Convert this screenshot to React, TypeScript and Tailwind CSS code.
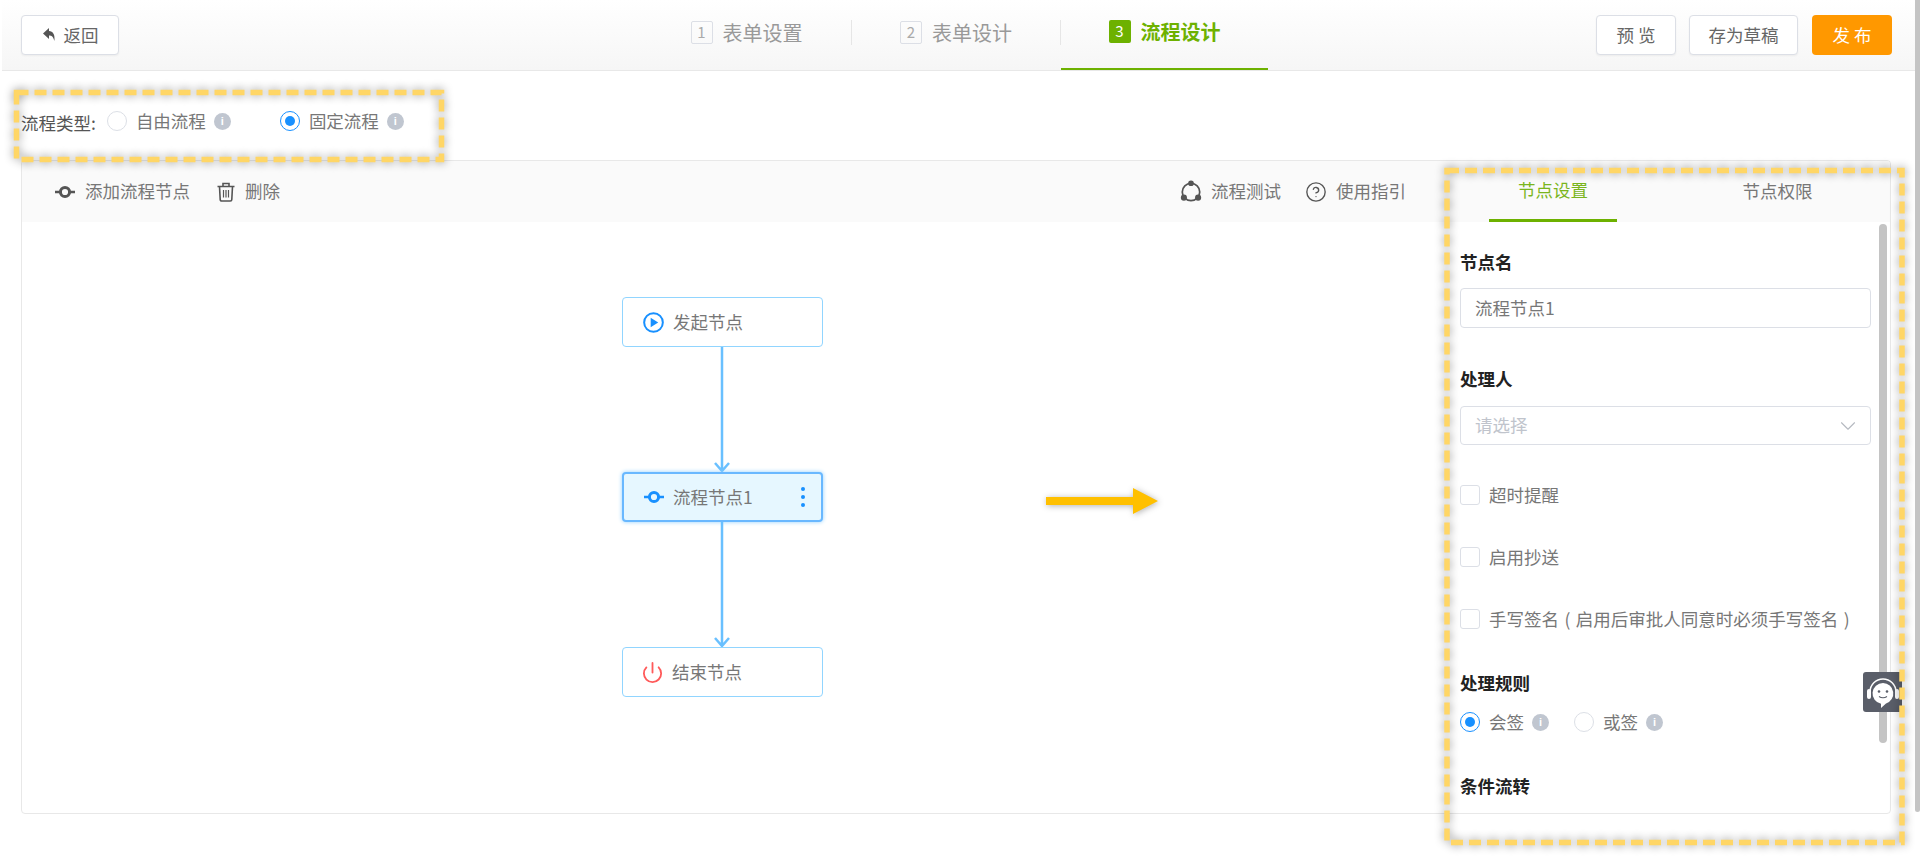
import { ChevronDown, CircleHelp, Power } from "lucide-react";

const FONT = "font-['Noto_Sans_CJK_SC','Liberation_Sans',sans-serif]";

function NodeIcon({ color, size = 20 }: { color: string; size?: number }) {
  return (
    <svg width={size} height={size} viewBox="0 0 20 20" fill="none" stroke={color}>
      <circle cx="10" cy="10" r="4.6" strokeWidth="3" />
      <path d="M0 10h5M15 10h5" strokeWidth="2.4" />
    </svg>
  );
}

function PlayIcon() {
  return (
    <svg width="21" height="21" viewBox="0 0 20 20">
      <circle cx="10" cy="10" r="8.9" fill="none" stroke="#1890ff" strokeWidth="1.9" />
      <path d="M7.3 5.4v9.2l7.2-4.6z" fill="#1890ff" />
    </svg>
  );
}

function BackIcon() {
  return (
    <svg width="16" height="16" viewBox="0 0 16 16" fill="#555">
      <path d="M7 1 1 6.5 7 12V8.4c2.6 0 4.2.9 5.4 5.6.8-6.2-1.4-10-5.4-10z" />
    </svg>
  );
}

function TrashIcon() {
  return (
    <svg width="18" height="20" viewBox="0 0 18 20" fill="none" stroke="#555" strokeWidth="1.6">
      <path d="M0.5 4.5h17M6 4.5V1.5h6v3M2.5 4.5l.7 13a1.5 1.5 0 0 0 1.5 1.5h8.6a1.5 1.5 0 0 0 1.5-1.5l.7-13" />
      <path d="M6.5 8v7.5M9 8v7.5M11.5 8v7.5" strokeWidth="1.2" />
    </svg>
  );
}

function FlowTestIcon() {
  return (
    <svg width="24" height="24" viewBox="0 0 22 22" fill="#555">
      <circle cx="11" cy="11" r="8" fill="none" stroke="#555" strokeWidth="1.6" />
      <circle cx="11" cy="3" r="2.6" />
      <circle cx="4.5" cy="16.2" r="2.8" />
      <circle cx="17.5" cy="16.2" r="2.8" />
    </svg>
  );
}

function Kebab() {
  return (
    <div className="flex flex-col gap-[4px] ml-auto mr-[16px]">
      <span className="w-[4px] h-[4px] rounded-full bg-[#1890ff]" />
      <span className="w-[4px] h-[4px] rounded-full bg-[#1890ff]" />
      <span className="w-[4px] h-[4px] rounded-full bg-[#1890ff]" />
    </div>
  );
}

function InfoDot() {
  return (
    <span className="w-[17px] h-[17px] rounded-full bg-[#c0c6d0] text-white text-[11px] font-bold leading-[17px] text-center font-['Liberation_Sans',sans-serif]">
      i
    </span>
  );
}

function Radio({ checked, label }: { checked?: boolean; label: string }) {
  return (
    <div className="flex items-center">
      {checked ? (
        <span className="w-[20px] h-[20px] rounded-full border border-[#1890ff] flex items-center justify-center">
          <span className="w-[10px] h-[10px] rounded-full bg-[#1890ff]" />
        </span>
      ) : (
        <span className="w-[20px] h-[20px] rounded-full border border-[#dcdfe6] bg-white" />
      )}
      <span className="ml-[9px] mr-[8px] text-[17.5px] text-[#777] leading-none">{label}</span>
      <InfoDot />
    </div>
  );
}

function Check({ label, className }: { label: string; className?: string }) {
  return (
    <div className={`flex items-center h-[20px] ${className}`}>
      <span className="w-[20px] h-[20px] rounded-[3px] border border-[#dcdfe6] bg-white" />
      <span className="ml-[9px] text-[17.5px] text-[#777] leading-none whitespace-nowrap [word-spacing:1.5px]">
        {label}
      </span>
    </div>
  );
}

function Step({
  num,
  label,
  active,
  className,
}: {
  num: number;
  label: string;
  active?: boolean;
  className: string;
}) {
  return (
    <div
      className={`h-full pb-[5px] flex items-center justify-center gap-[10px] ${className} ${
        active ? "border-b-2 border-[#6db100]" : ""
      }`}
    >
      <span
        className={`w-[22px] h-[23px] rounded-[2px] text-[15px] flex items-center justify-center ${
          active ? "bg-[#6db100] text-white" : "border border-[#dcdfe6] text-[#aaa]"
        }`}
      >
        {num}
      </span>
      <span className={`text-[20px] leading-none ${active ? "font-bold text-[#6db100]" : "text-[#999]"}`}>
        {label}
      </span>
    </div>
  );
}

function HeadButton({ children, className }: { children: React.ReactNode; className?: string }) {
  return (
    <button
      className={`h-[40px] rounded-[4px] border border-[#dcdfe6] bg-white text-[17.5px] text-[#666] flex items-center justify-center shadow-[0_1px_2px_rgba(0,0,0,0.05)] ${className}`}
    >
      {children}
    </button>
  );
}

function FlowNode({
  icon,
  label,
  selected,
  className,
  trailing,
}: {
  icon: React.ReactNode;
  label: string;
  selected?: boolean;
  className: string;
  trailing?: React.ReactNode;
}) {
  return (
    <div
      className={`absolute left-[600px] w-[201px] h-[50px] rounded-[4px] flex items-center pl-[20px] gap-[9px] ${className} ${
        selected
          ? "bg-[#e6f7ff] border-2 border-[#69b8ff] shadow-[0_0_4px_#91d0ff]"
          : "bg-white border-[1.5px] border-[#91d5ff]"
      }`}
    >
      {icon}
      <span className="text-[17.5px] text-[#777] leading-none">{label}</span>
      {trailing}
    </div>
  );
}

function Edge({ className }: { className: string }) {
  return (
    <svg className={`absolute left-[690px] ${className}`} width="20" height="125" fill="none" stroke="#69c0ff" strokeWidth="2.5">
      <path d="M10 0v124M3 116l7 8 7-8" />
    </svg>
  );
}

function Field({ title, children }: { title: string; children?: React.ReactNode }) {
  return (
    <div>
      <div className="text-[17.5px] font-bold text-[#222] leading-[24px]">{title}</div>
      {children}
    </div>
  );
}

export default function App() {
  return (
    <div className={`relative h-[863px] overflow-hidden bg-white flex ${FONT}`}>
      <div className="flex-1 min-w-0">
        <header className="h-[71px] ml-[2px] border-b border-[#e8e8e8] bg-gradient-to-b from-white to-[#f6f6f6] flex items-center justify-between pl-[19px] pr-[23px]">
          <HeadButton className="w-[98px] gap-[6px]">
            <BackIcon />
            返回
          </HeadButton>
          <div className="absolute left-[642px] top-0 h-[70px] flex items-center">
            <Step className="w-[209px]" num={1} label="表单设置" />
            <span className="w-px h-[25px] mb-[5px] bg-[#e6e6e6]" />
            <Step className="w-[208px]" num={2} label="表单设计" />
            <span className="w-px h-[25px] mb-[5px] bg-[#e6e6e6]" />
            <Step className="w-[207px]" num={3} label="流程设计" active />
          </div>
          <div className="flex gap-[13px]">
            <HeadButton className="w-[80px]">预 览</HeadButton>
            <HeadButton className="w-[109px]">存为草稿</HeadButton>
            <button className="ml-[1px] w-[80px] h-[40px] rounded-[4px] bg-[#ff9800] text-white text-[17.5px]">发 布</button>
          </div>
        </header>

        <div className="h-[89px] pl-[21px] pt-[11px] flex items-center">
          <span className="text-[17.5px] text-[#555] leading-none mr-[11px] mt-[3px]">流程类型:</span>
          <Radio label="自由流程" />
          <div className="w-[49px]" />
          <Radio checked label="固定流程" />
        </div>

        <div className="ml-[21px] w-[1870px] h-[654px] border border-[#e8e8e8] rounded-[4px] overflow-hidden flex flex-col">
          <div className="h-[61px] shrink-0 bg-[#fafafa] flex items-center">
            <div className="flex-1 flex items-center pl-[33px] text-[17.5px] text-[#777]">
              <NodeIcon color="#555" />
              <span className="ml-[10px]">添加流程节点</span>
              <span className="ml-[27px]">
                <TrashIcon />
              </span>
              <span className="ml-[10px]">删除</span>
              <div className="ml-auto mr-[39px] flex items-center">
                <FlowTestIcon />
                <span className="ml-[8px]">流程测试</span>
                <CircleHelp size={22} strokeWidth={1.5} color="#555" className="ml-[24px]" />
                <span className="ml-[9px]">使用指引</span>
              </div>
            </div>
            <div className="w-[445px] h-full flex text-[17.5px]">
              <div className="ml-[44px] w-[128px] h-full border-b-[3px] border-[#6db100] text-[#7ab51d] flex items-center justify-center">
                节点设置
              </div>
              <div className="ml-[125px] w-[71px] h-full text-[#777] flex items-center justify-center">节点权限</div>
            </div>
          </div>

          <div className="flex-1 min-h-0 flex">
            <div className="flex-1 relative">
              <FlowNode className="top-[75px]" icon={<PlayIcon />} label="发起节点" />
              <Edge className="top-[125px]" />
              <FlowNode
                className="top-[250px]"
                icon={<NodeIcon color="#1890ff" />}
                label="流程节点1"
                selected
                trailing={<Kebab />}
              />
              <Edge className="top-[300px]" />
              <FlowNode
                className="top-[425px]"
                icon={<Power size={23} strokeWidth={1.9} color="#ff5a5a" className="-ml-[2px] -mr-[1px]" />}
                label="结束节点"
              />
            </div>

            <aside className="relative w-[445px] pl-[15px] pr-[19px] pt-[28px]">
              <span className="absolute right-[3px] top-[2px] w-[8px] h-[519px] rounded-full bg-[#c4c4c4]" />
              <Field title="节点名">
                <div className="mt-[14px] h-[40px] rounded-[4px] border border-[#dcdfe6] flex items-center pl-[14px] text-[17.5px] text-[#777]">
                  流程节点1
                </div>
              </Field>
              <div className="mt-[39px]">
                <Field title="处理人">
                  <div className="mt-[15px] h-[39px] rounded-[4px] border border-[#dcdfe6] flex items-center justify-between pl-[14px] pr-[9px] text-[17.5px] text-[#c0c4cc]">
                    请选择
                    <ChevronDown size={26} strokeWidth={1} color="#b5b9c0" />
                  </div>
                </Field>
              </div>
              <Check className="mt-[40px]" label="超时提醒" />
              <Check className="mt-[42px]" label="启用抄送" />
              <Check className="mt-[42px]" label="手写签名 ( 启用后审批人同意时必须手写签名 )" />
              <div className="mt-[42px]">
                <Field title="处理规则">
                  <div className="mt-[17px] flex gap-[25px]">
                    <Radio checked label="会签" />
                    <Radio label="或签" />
                  </div>
                </Field>
              </div>
              <div className="mt-[42px]">
                <Field title="条件流转" />
              </div>
            </aside>
          </div>
        </div>
      </div>

      {/* page scrollbar */}
      <div className="w-[5px] bg-white">
        <div className="h-[812px] rounded-b-full bg-[#c4c4c4]" />
      </div>

      {/* chat widget */}
      <div className="absolute left-[1863px] top-[672px] w-[39px] h-[40px] rounded-l-[3px] bg-[#5a5e69] flex items-center justify-center">
        <svg width="38" height="34" viewBox="0 0 38 34">
          <path d="M6 17a13 13 0 0 1 26 0" fill="none" stroke="#fff" strokeWidth="1.5" />
          <rect x="3" y="14" width="4" height="10" rx="2" fill="#fff" />
          <rect x="31" y="14" width="4" height="10" rx="2" fill="#fff" />
          <path d="M19 8a10.5 10.5 0 0 1 3 20.5L17 33v-4.2A10.5 10.5 0 0 1 19 8z" fill="#fff" />
          <circle cx="15" cy="16.5" r="1.3" fill="#5a5e69" />
          <circle cx="23" cy="16.5" r="1.3" fill="#5a5e69" />
          <path d="M15 21.5q4 2.6 8 0" fill="none" stroke="#5a5e69" strokeWidth="1.1" />
        </svg>
      </div>

      {/* annotations drawn over the screenshot */}
      <svg className="absolute left-0 top-0 pointer-events-none" width="1920" height="863" fill="none">
        <g className="drop-shadow-[0_0_5px_rgba(0,0,0,0.45)]">
          <rect x="16.5" y="92.5" width="425" height="67" stroke="#ffd666" strokeWidth="5.5" strokeDasharray="12 6" />
          <rect x="1447" y="170.5" width="455" height="672" stroke="#ffd666" strokeWidth="5.5" strokeDasharray="12 6" />
        </g>
        <path
          d="M1046 497h87v-9l25 13-25 13v-9h-87z"
          fill="#ffc000"
          className="drop-shadow-[1px_1px_3px_rgba(0,0,0,0.3)]"
        />
      </svg>
    </div>
  );
}
